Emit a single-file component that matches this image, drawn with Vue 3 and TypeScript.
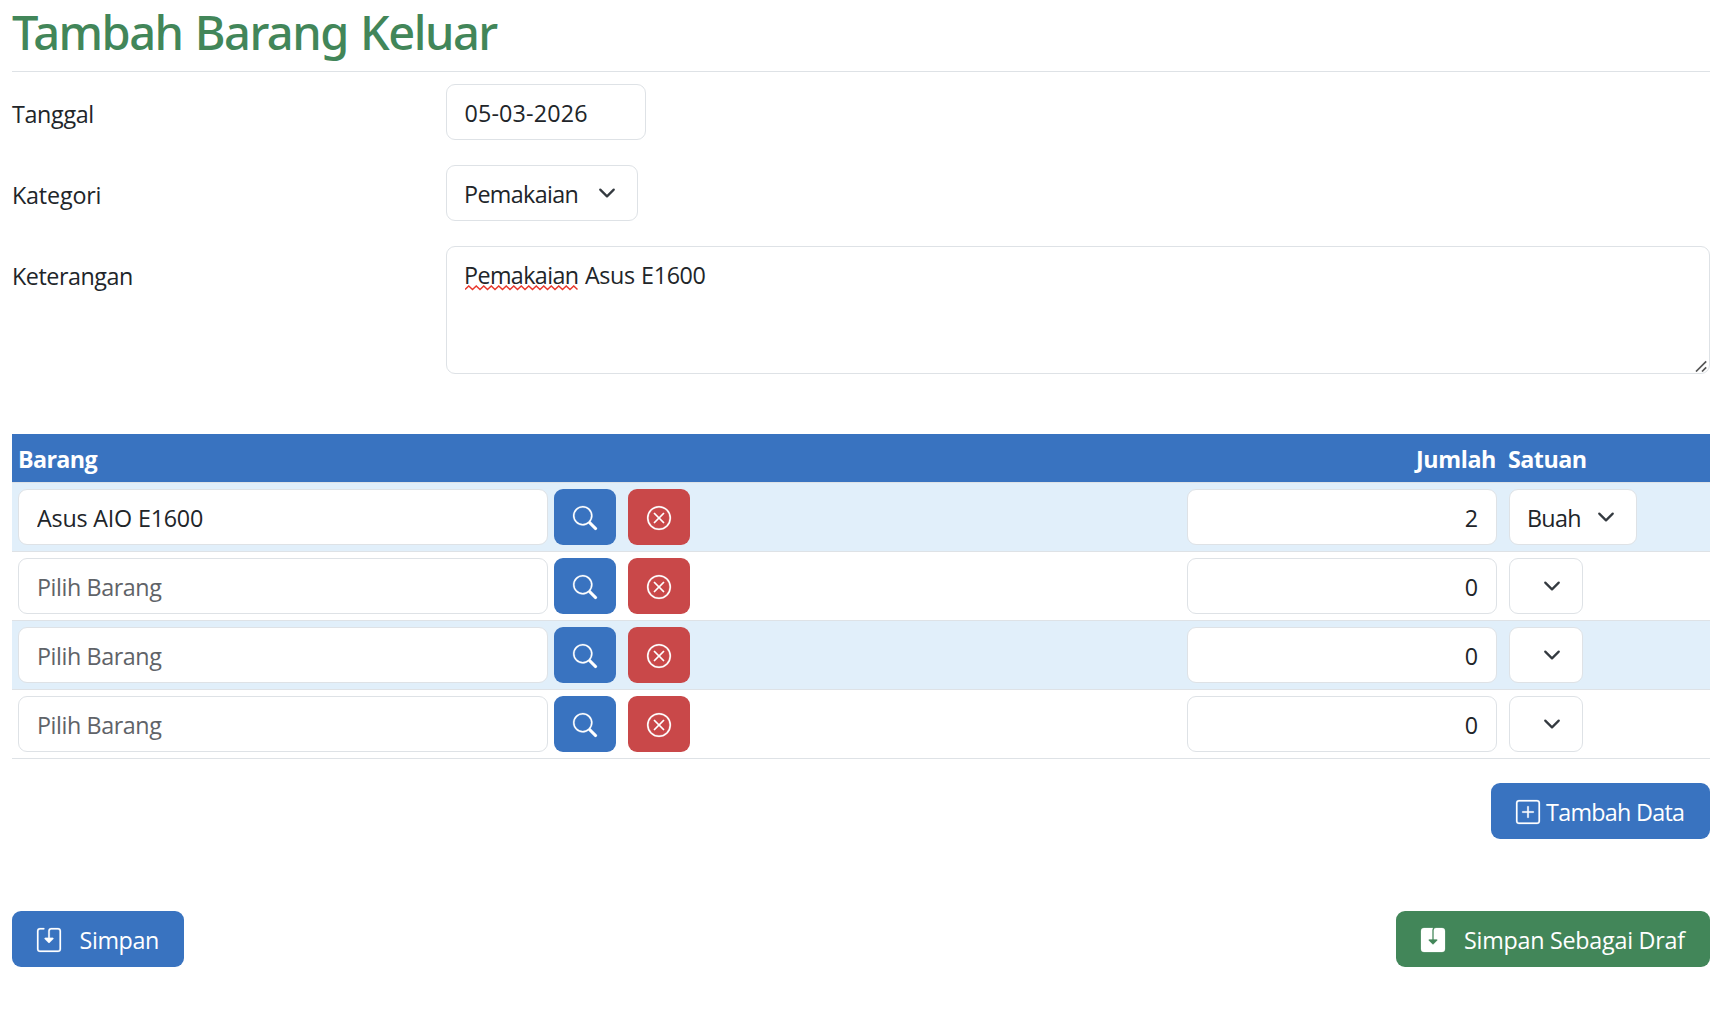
<script setup lang="ts">
import { reactive } from 'vue'

interface ItemRow {
  barang: string
  jumlah: number
  satuan: string
}

const form = reactive({
  tanggal: '05-03-2026',
  kategori: 'Pemakaian',
})

const rows = reactive<ItemRow[]>([
  { barang: 'Asus AIO E1600', jumlah: 2, satuan: 'Buah' },
  { barang: '', jumlah: 0, satuan: '' },
  { barang: '', jumlah: 0, satuan: '' },
  { barang: '', jumlah: 0, satuan: '' },
])

// Zigzag underline for the unknown word: 15 waves of 7.5px
const squiggle = 'M0 4.5' + Array.from({ length: 15 }, (_, i) => `L${i * 7.5 + 3.75} 1L${(i + 1) * 7.5} 4.5`).join('')
</script>

<template>
  <main class="page">
    <h1 class="title">Tambah Barang Keluar</h1>

    <div class="field">
      <label class="label tanggal">Tanggal</label>
      <input v-model="form.tanggal" class="control date" type="text" />
    </div>

    <div class="field">
      <label class="label kategori">Kategori</label>
      <div class="control select">
        <span class="kategori-value">{{ form.kategori }}</span>
        <svg class="chevron" viewBox="0 0 16 16"><path d="m2 5 6 6 6-6" /></svg>
      </div>
    </div>

    <div class="field">
      <label class="label keterangan">Keterangan</label>
      <div class="control area">
        <span class="misspelt">Pemakaian<svg class="squiggle" viewBox="0 0 113 6"><path :d="squiggle" /></svg></span> Asus E1600
        <svg class="grip" viewBox="0 0 12 12"><path d="M1 11.5 11.2 1.3M7 11.5 11.2 7.3" /></svg>
      </div>
    </div>

    <section class="table">
      <div class="row head">
        <div class="cell h-barang">Barang</div>
        <div class="cell h-jumlah">Jumlah</div>
        <div class="cell h-satuan">Satuan</div>
      </div>
      <div v-for="(row, i) in rows" :key="i" class="row body">
        <div class="cell item">
          <input v-model="row.barang" class="control barang" type="text" placeholder="Pilih Barang" />
          <button class="btn square blue search" type="button" aria-label="Cari">
            <svg class="icon" viewBox="0 0 16 16"><path d="M11.742 10.344a6.5 6.5 0 1 0-1.397 1.398h-.001q.044.06.098.115l3.85 3.85a1 1 0 0 0 1.415-1.414l-3.85-3.85a1 1 0 0 0-.115-.1zM12 6.5a5.5 5.5 0 1 1-11 0 5.5 5.5 0 0 1 11 0" /></svg>
          </button>
          <button class="btn square red" type="button" aria-label="Hapus">
            <svg class="icon" viewBox="0 0 16 16">
              <path d="M8 15A7 7 0 1 1 8 1a7 7 0 0 1 0 14m0 1A8 8 0 1 0 8 0a8 8 0 0 0 0 16" />
              <path d="M4.646 4.646a.5.5 0 0 1 .708 0L8 7.293l2.646-2.647a.5.5 0 0 1 .708.708L8.707 8l2.647 2.646a.5.5 0 0 1-.708.708L8 8.707l-2.646 2.647a.5.5 0 0 1-.708-.708L7.293 8 4.646 5.354a.5.5 0 0 1 0-.708" />
            </svg>
          </button>
        </div>
        <div class="cell"><input v-model="row.jumlah" class="control jumlah" type="text" /></div>
        <div class="cell">
          <div class="control select unit" :class="{ filled: row.satuan }">
            <span>{{ row.satuan }}</span>
            <svg class="chevron" viewBox="0 0 16 16"><path d="m2 5 6 6 6-6" /></svg>
          </div>
        </div>
      </div>
    </section>

    <div class="add">
      <button class="btn blue add-btn" type="button">
        <svg class="icon" viewBox="0 0 16 16">
          <path d="M14 1a1 1 0 0 1 1 1v12a1 1 0 0 1-1 1H2a1 1 0 0 1-1-1V2a1 1 0 0 1 1-1zM2 0a2 2 0 0 0-2 2v12a2 2 0 0 0 2 2h12a2 2 0 0 0 2-2V2a2 2 0 0 0-2-2z" />
          <path d="M8 4a.5.5 0 0 1 .5.5v3h3a.5.5 0 0 1 0 1h-3v3a.5.5 0 0 1-1 0v-3h-3a.5.5 0 0 1 0-1h3v-3A.5.5 0 0 1 8 4" />
        </svg>
        <span>Tambah Data</span>
      </button>
    </div>

    <div class="actions">
      <button class="btn blue save-btn" type="button">
        <svg class="icon" viewBox="0 0 16 16"><path d="M2 1a1 1 0 0 0-1 1v12a1 1 0 0 0 1 1h12a1 1 0 0 0 1-1V2a1 1 0 0 0-1-1H9.5a1 1 0 0 0-1 1v4.5h2a.5.5 0 0 1 .354.854l-2.5 2.5a.5.5 0 0 1-.708 0l-2.5-2.5A.5.5 0 0 1 5.5 6.5h2V2a2 2 0 0 1 2-2H14a2 2 0 0 1 2 2v12a2 2 0 0 1-2 2H2a2 2 0 0 1-2-2V2a2 2 0 0 1 2-2h2.5a.5.5 0 0 1 0 1z" /></svg>
        <span>Simpan</span>
      </button>
      <button class="btn green draft-btn" type="button">
        <svg class="icon" viewBox="0 0 16 16"><path d="M8.5 1.5A1.5 1.5 0 0 1 10 0h4a2 2 0 0 1 2 2v12a2 2 0 0 1-2 2H2a2 2 0 0 1-2-2V2a2 2 0 0 1 2-2h6c-.314.418-.5.937-.5 1.5v6h-2a.5.5 0 0 0-.354.854l2.5 2.5a.5.5 0 0 0 .708 0l2.5-2.5A.5.5 0 0 0 10.5 7.5h-2z" /></svg>
        <span>Simpan Sebagai Draf</span>
      </button>
    </div>
  </main>
</template>

<style>
body {
  background: #fff;
}
</style>

<style scoped>
.page,
.page * {
  box-sizing: border-box;
}
.page {
  padding: 0 8px 42px 12px;
  color: #212529;
  font: 23.3px/36px 'Open Sans', 'Noto Sans', sans-serif;
}
.title {
  height: 72px;
  margin: 0 0 12px;
  border-bottom: 1px solid #dee2e6;
  color: #428659;
  font: 500 47px/64px 'Noto Sans', sans-serif;
  letter-spacing: -1.5px;
  word-spacing: 1.5px;
}
.field {
  display: flex;
  margin-bottom: 25px;
}
.label {
  width: 434px;
  padding-top: 12px;
}
.tanggal {
  letter-spacing: -0.33px;
}
.kategori {
  letter-spacing: -0.17px;
}
.keterangan {
  letter-spacing: -0.45px;
}
.control {
  display: block;
  height: 56px;
  margin: 0;
  padding: 10px 17px 8px;
  border: 1px solid #dee2e6;
  border-radius: 9px;
  outline: none;
  background: #fff;
  color: inherit;
  font: inherit;
}
.date {
  width: 200px;
  padding-left: 17.5px;
  letter-spacing: 0.16px;
}
.select {
  display: flex;
  width: 192px;
  padding-right: 21px;
  justify-content: space-between;
}
.kategori-value {
  letter-spacing: -0.63px;
}
.chevron {
  width: 18px;
  height: 18px;
  margin-top: 8px;
  fill: none;
  stroke: #343a40;
  stroke-width: 2;
  stroke-linecap: round;
  stroke-linejoin: round;
}
.area {
  position: relative;
  flex: 1;
  height: 128px;
  letter-spacing: -0.36px;
  word-spacing: 0.7px;
}
.misspelt {
  position: relative;
  letter-spacing: -0.6px;
}
.squiggle {
  position: absolute;
  left: 1px;
  top: 26px;
  width: 113px;
  height: 6px;
  fill: none;
  stroke: #e8382c;
  stroke-width: 1.5;
}
.grip {
  position: absolute;
  right: 2px;
  bottom: 1px;
  width: 12px;
  height: 12px;
  fill: none;
  stroke: #555;
  stroke-width: 1.7;
}
.table {
  margin-top: 60px;
}
.row {
  display: grid;
  grid-template-columns: 1169px 322px 1fr;
  border-bottom: 1px solid #dee2e6;
}
.cell {
  padding: 6px;
}
.head {
  background: #3973c0;
  color: #fff;
  font-weight: 700;
}
.head .cell {
  padding: 7px 6px 5px;
}
.h-barang {
  letter-spacing: -0.65px;
}
.head .h-jumlah {
  padding-right: 7px;
  text-align: right;
  letter-spacing: -0.4px;
}
.head .h-satuan {
  padding-left: 5px;
  letter-spacing: -0.53px;
}
.body:nth-child(even) {
  background: #e1effa;
}
.item {
  display: flex;
}
.barang {
  width: 530px;
  padding-left: 18px;
  letter-spacing: -0.2px;
}
.barang::placeholder {
  color: #5f6368;
  opacity: 1;
  letter-spacing: -0.41px;
}
.jumlah {
  width: 310px;
  padding-right: 18px;
  text-align: right;
}
.unit {
  width: 74px;
  letter-spacing: -0.7px;
}
.unit.filled {
  width: 128px;
}
.btn {
  display: flex;
  height: 56px;
  margin: 0;
  padding: 11px 24px 7px 25px;
  border: 0;
  border-radius: 9px;
  color: #fff;
  font: inherit;
  white-space: nowrap;
}
.icon {
  flex: none;
  width: 24px;
  height: 24px;
  margin-top: 6px;
  overflow: visible;
  fill: #fff;
  stroke: #fff;
  stroke-width: 0.15;
}
.square {
  width: 62px;
  padding-left: 19px;
  padding-right: 19px;
}
.search {
  margin: 0 12px 0 6px;
}
.blue {
  background: #3973c0;
}
.red {
  background: #c94849;
}
.green {
  background: #428659;
}
.add {
  display: flex;
  justify-content: flex-end;
  margin-top: 24px;
}
.add-btn {
  width: 219px;
  gap: 6px;
  letter-spacing: -0.7px;
}
.actions {
  display: flex;
  justify-content: space-between;
  margin-top: 72px;
}
.save-btn {
  width: 172px;
  gap: 18.5px;
  letter-spacing: -0.38px;
}
.draft-btn {
  width: 314px;
  gap: 19px;
  letter-spacing: -0.25px;
}
</style>
